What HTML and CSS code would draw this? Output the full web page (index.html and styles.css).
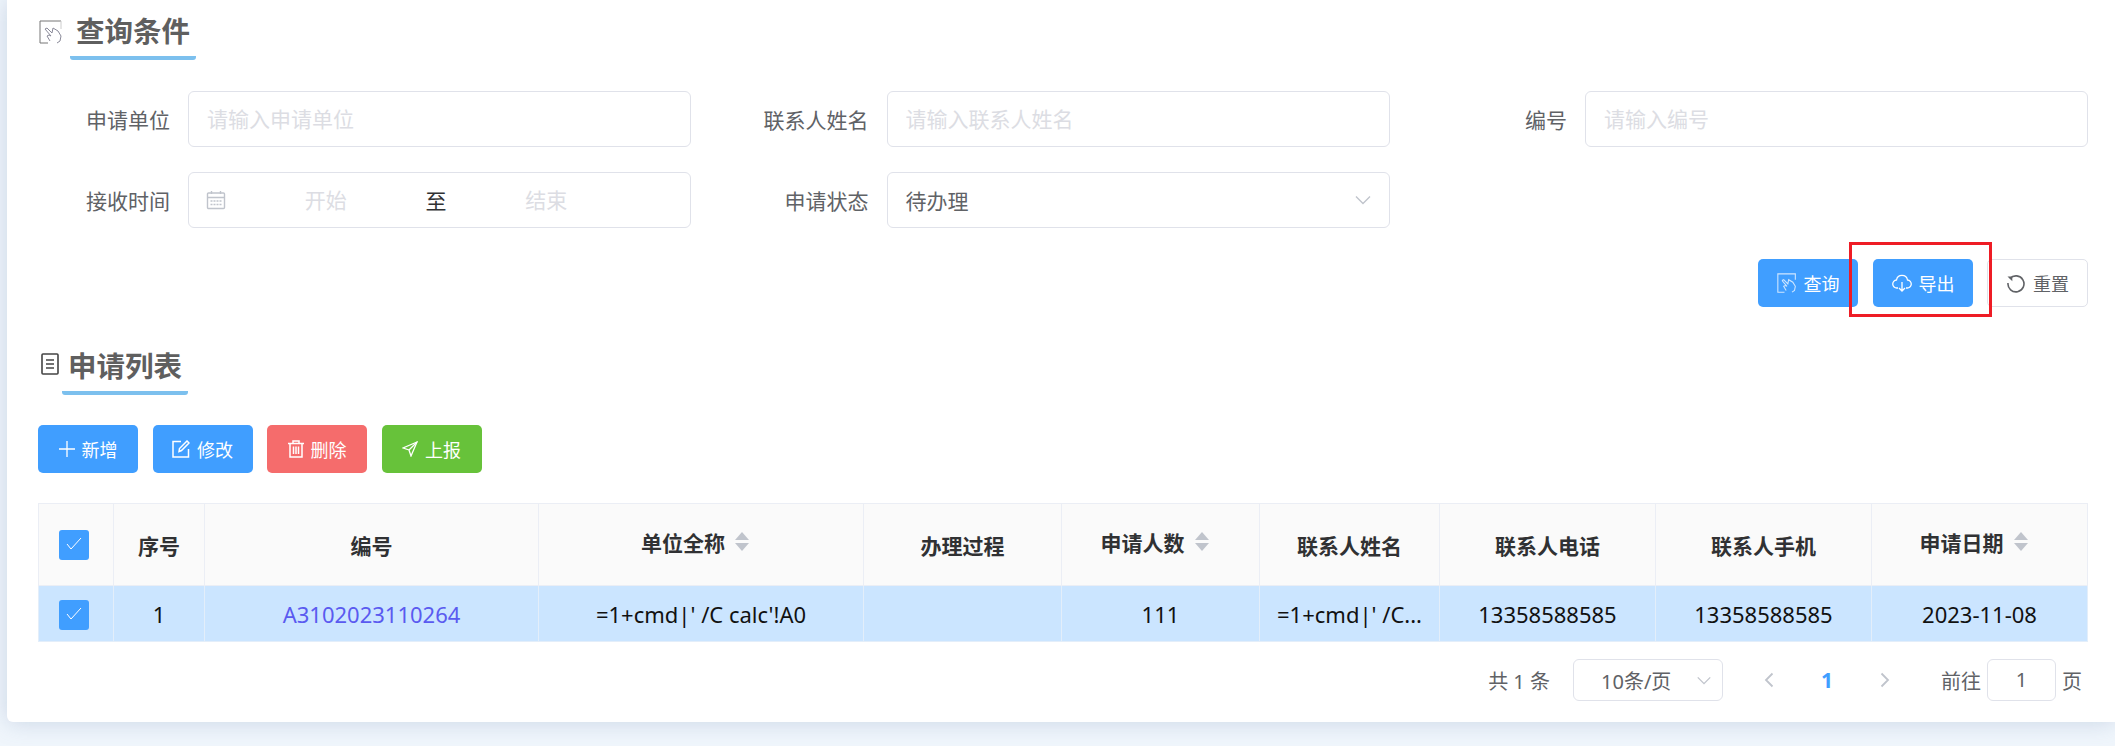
FILE: index.html
```html
<!DOCTYPE html>
<html lang="zh-CN">
<head>
    <meta charset="UTF-8">
    <title>申请列表</title>
    <link rel="stylesheet" href="styles.css">
</head>
<body>

<div class="panel">

    <div class="section-title first">
        <svg class="title-icon" width="24" height="24" viewBox="0 0 24 24" fill="none" stroke="#777" stroke-width="1">
            <path d="M22 1H1v22h8"/>
            <path d="M22 1v8" stroke="#ccc"/>
            <path d="M6 9l6 7-2-1-2 1 3 5M6 9l2-1 5 5 1-5 5 3 3 5-1 5-3 2" stroke="#8a8a99"/>
        </svg>
        <span class="title-text">查询条件</span>
    </div>

    <div class="form-grid">
        <div class="form-item">
            <label class="form-label">申请单位</label>
            <input class="text-input" placeholder="请输入申请单位">
        </div>
        <div class="form-item">
            <label class="form-label">联系人姓名</label>
            <input class="text-input" placeholder="请输入联系人姓名">
        </div>
        <div class="form-item">
            <label class="form-label">编号</label>
            <input class="text-input" placeholder="请输入编号">
        </div>
        <div class="form-item">
            <label class="form-label">接收时间</label>
            <div class="date-range">
                <svg width="20" height="20" viewBox="0 0 20 20" fill="none" stroke="#c0c4cc" stroke-width="1.4">
                    <rect x="1.500" y="3" width="17" height="15.500" rx="1"/>
                    <path d="M1.500 7.500h17M5.500 1v3M14.500 1v3"/>
                    <path d="M4.500 11h11M4.500 14.500h11" stroke-dasharray="2 1"/>
                </svg>
                <input class="date-input" placeholder="开始">
                <span class="date-sep">至</span>
                <input class="date-input" placeholder="结束">
            </div>
        </div>
        <div class="form-item">
            <label class="form-label">申请状态</label>
            <div class="select-box">
                <span>待办理</span>
                <svg width="18" height="10" viewBox="0 0 18 10" fill="none" stroke="#c0c4cc" stroke-width="1.4"><path d="M2 1.500l7 7 7-7"/></svg>
            </div>
        </div>
    </div>

    <div class="form-actions">
        <button class="btn btn-blue">
            <svg width="20" height="22" viewBox="0 0 24 24" fill="none" stroke="#cfe6ff" stroke-width="1.300">
                <path d="M22 8V1H1v22h8"/>
                <path d="M6 9l6 7-2-1-2 1 3 5M6 9l2-1 5 5 1-5 5 3 3 5-1 5-3 2"/>
            </svg>
            查询
        </button>
        <button class="btn btn-blue btn-marked">
            <svg width="20" height="20" viewBox="0 0 20 20" fill="none" stroke="#fff" stroke-width="1.300">
                <path d="M6 15H5a4 4 0 0 1-.5-8A5.600 5.600 0 0 1 15.500 7 4 4 0 0 1 15 15h-1"/>
                <path d="M10 9v9M7 15l3 3 3-3"/>
            </svg>
            导出
            <span class="red-mark"></span>
        </button>
        <button class="btn btn-plain">
            <svg width="20" height="20" viewBox="0 0 20 20" fill="none" stroke="#606266" stroke-width="1.600">
                <path d="M4 5.500A8 8 0 1 1 2 10"/>
                <path d="M1.500 3.500l4.800 4.800V3.500z" stroke="none" fill="#606266"/>
            </svg>
            重置
        </button>
    </div>

    <div class="section-title second">
        <svg class="title-icon-list" width="18" height="22" viewBox="0 0 18 22" fill="none" stroke="#444" stroke-width="1.600">
            <rect x="1" y="1" width="16" height="20" rx="1"/>
            <path d="M5 7h8M5 11h8M5 15h8"/>
        </svg>
        <span class="title-text">申请列表</span>
    </div>

    <div class="toolbar">
        <button class="btn btn-blue">
            <svg width="16" height="16" viewBox="0 0 16 16" fill="none" stroke="#fff" stroke-width="1.300"><path d="M8 0v16M0 8h16"/></svg>
            新增
        </button>
        <button class="btn btn-blue">
            <svg width="18" height="18" viewBox="0 0 18 18" fill="none" stroke="#fff" stroke-width="1.500">
                <path d="M9 1.500H1v15.500h15.500V9"/>
                <path d="M7 11.500l.5-3L15 1l2 2-7.500 7.500z"/>
            </svg>
            修改
        </button>
        <button class="btn btn-red">
            <svg width="16" height="18" viewBox="0 0 16 18" fill="none" stroke="#fff" stroke-width="1.500">
                <path d="M0 3.500h16M5 3.500V1h6v2.500M2 3.500V17h12V3.500M5.500 6.500V14M8 6.500V14M10.500 6.500V14"/>
            </svg>
            删除
        </button>
        <button class="btn btn-green">
            <svg width="16" height="16" viewBox="0 0 16 16" fill="none" stroke="#fff" stroke-width="1.300">
                <path d="M15 1L1 7l6 2 2 6z"/><path d="M15 1L7 9"/>
            </svg>
            上报
        </button>
    </div>

    <table class="data-table">
        <colgroup>
            <col class="col-check"><col class="col-index"><col class="col-code"><col class="col-name">
            <col class="col-process"><col class="col-count"><col class="col-contact">
            <col class="col-phone"><col class="col-phone"><col class="col-phone">
        </colgroup>
        <thead>
            <tr>
                <th class="check-cell"><span class="checkbox"><svg class="check-mark" width="16" height="13" viewBox="0 0 16 13" fill="none" stroke="#fff" stroke-width="1"><path d="M1 7l4 5L15 1"/></svg></span></th>
                <th>序号</th>
                <th>编号</th>
                <th><span class="sort-head">单位全称<span class="carets"><i class="caret-up"></i><i class="caret-down"></i></span></span></th>
                <th>办理过程</th>
                <th><span class="sort-head">申请人数<span class="carets"><i class="caret-up"></i><i class="caret-down"></i></span></span></th>
                <th>联系人姓名</th>
                <th>联系人电话</th>
                <th>联系人手机</th>
                <th><span class="sort-head">申请日期<span class="carets"><i class="caret-up"></i><i class="caret-down"></i></span></span></th>
            </tr>
        </thead>
        <tbody>
            <tr>
                <td class="check-cell"><span class="checkbox"><svg class="check-mark" width="16" height="13" viewBox="0 0 16 13" fill="none" stroke="#fff" stroke-width="1"><path d="M1 7l4 5L15 1"/></svg></span></td>
                <td>1</td>
                <td><a class="code-link" href="#">A3102023110264</a></td>
                <td>=1+cmd|' /C calc'!A0</td>
                <td></td>
                <td>111</td>
                <td>=1+cmd|' /C...</td>
                <td>13358588585</td>
                <td>13358588585</td>
                <td>2023-11-08</td>
            </tr>
        </tbody>
    </table>

    <div class="pagination">
        <span class="page-total">共 1 条</span>
        <div class="page-size">
            <span>10条/页</span>
            <svg width="16" height="9" viewBox="0 0 18 10" fill="none" stroke="#c0c4cc" stroke-width="1.500"><path d="M2 1.500l7 7 7-7"/></svg>
        </div>
        <svg class="page-prev" width="10" height="16" viewBox="0 0 10 16" fill="none" stroke="#c0c4cc" stroke-width="1.800"><path d="M8.500 1.500L2 8l6.500 6.500"/></svg>
        <span class="page-current">1</span>
        <svg class="page-next" width="10" height="16" viewBox="0 0 10 16" fill="none" stroke="#c0c4cc" stroke-width="1.800"><path d="M1.500 1.500L8 8l-6.500 6.500"/></svg>
        <span class="page-jump">前往</span>
        <div class="page-input">1</div>
        <span>页</span>
    </div>

</div>

</body>
</html>
```

FILE: styles.css
```css
body {
    margin: 0;
    height: 746px;
    overflow: hidden;
    background: #f0f6fc;
    font-family: "Noto Sans", "Noto Sans CJK SC", sans-serif;
    color: #606266;
}
.panel {
    box-sizing: border-box;
    height: 722px;
    margin-left: 7px;
    padding: 0 27px 0 31px;
    background: #fff;
    border-bottom-left-radius: 6px;
    box-shadow: 0 0 24px rgba(90, 115, 160, 0.26);
}
.section-title {
    display: flex;
    align-items: flex-start;
}
.section-title.first {
    padding-top: 12px;
}
.section-title.second {
    margin-top: 40px;
}
.title-icon {
    margin: 8px 0 0 1px;
}
.title-icon-list {
    margin: 6px 0 0 3px;
}
.title-text {
    font-size: 28.5px;
    line-height: 38px;
    font-weight: 700;
    color: #5f5f5f;
    padding: 0 6px 6px;
    margin-left: 7px;
    border-bottom: 4px solid #7cc0ee;
    border-radius: 0 0 3px 3px;
}
.second .title-text {
    margin-left: 3px;
}
.form-grid {
    display: grid;
    grid-template-columns: repeat(3, 653px);
    column-gap: 45.5px;
    row-gap: 25px;
    margin-top: 31px;
}
.form-item {
    display: flex;
    align-items: center;
}
.form-label {
    width: 150px;
    padding-right: 18px;
    box-sizing: border-box;
    text-align: right;
    font-size: 21px;
    color: #606266;
}
.text-input,
.date-range,
.select-box {
    box-sizing: border-box;
    width: 503px;
    height: 56px;
    border: 1.5px solid #e0e2ea;
    border-radius: 6px;
    background: #fff;
    font-family: inherit;
    font-size: 21px;
    color: #606266;
}
.text-input {
    padding: 0 18px;
    outline: none;
}
.text-input::placeholder,
.date-input::placeholder {
    color: #dcdde3;
}
.date-range {
    display: flex;
    align-items: center;
    padding: 0 44px 0 17px;
}
.date-input {
    flex: 1;
    min-width: 0;
    border: none;
    outline: none;
    text-align: center;
    font-family: inherit;
    font-size: 21px;
    background: transparent;
}
.date-sep {
    color: #303133;
}
.select-box {
    display: flex;
    align-items: center;
    justify-content: space-between;
    padding: 0 17px 0 18px;
}
.form-actions {
    display: flex;
    justify-content: flex-end;
    gap: 15px;
    margin-top: 31px;
}
.btn {
    display: flex;
    align-items: center;
    justify-content: center;
    gap: 7px;
    box-sizing: border-box;
    width: 100px;
    height: 48px;
    padding: 0;
    border: none;
    border-radius: 5px;
    font-family: inherit;
    font-size: 18px;
    color: #fff;
}
.btn-blue {
    background: #409eff;
}
.btn-red {
    background: #f56c6c;
}
.btn-green {
    background: #67c23a;
}
.btn-plain {
    background: #fff;
    border: 1.5px solid #e0e2ea;
    color: #606266;
    width: 101px;
    margin-left: -1px;
}
.btn-marked {
    position: relative;
}
.red-mark {
    position: absolute;
    top: -17px;
    left: -24px;
    right: -19px;
    bottom: -10px;
    border: 3px solid #ee1c25;
}
.toolbar {
    display: flex;
    gap: 14.5px;
    margin-top: 30px;
}
.data-table {
    width: 2050px;
    margin-top: 30px;
    border-collapse: collapse;
    table-layout: fixed;
}
.col-check { width: 75px; }
.col-index { width: 91px; }
.col-code { width: 334px; }
.col-name { width: 325px; }
.col-process { width: 198px; }
.col-count { width: 198px; }
.col-contact { width: 180px; }
.col-phone { width: 216px; }
.data-table th,
.data-table td {
    padding: 0;
    text-align: center;
    vertical-align: middle;
}
.data-table th {
    height: 81px;
    background: #fafafa;
    border: 1.5px solid #ebeef5;
    font-size: 21px;
    font-weight: 700;
    color: #303133;
}
.data-table td {
    height: 55px;
    background: #cbe5ff;
    border: 1.5px solid #e3eefa;
    font-size: 22px;
    color: #111;
}
.data-table .check-cell {
    padding-right: 5px;
}
.code-link {
    color: #5a5af0;
    text-decoration: none;
}
.checkbox {
    display: inline-flex;
    align-items: center;
    justify-content: center;
    width: 30px;
    height: 30px;
    vertical-align: middle;
    background: #409eff;
    border-radius: 3px;
}
.check-mark {
    margin-bottom: 4px;
}
.sort-head {
    display: inline-flex;
    align-items: center;
    gap: 10px;
    margin-right: 12px;
    position: relative;
    top: -3px;
}
.carets {
    display: flex;
    flex-direction: column;
    gap: 3px;
}
.caret-up,
.caret-down {
    width: 0;
    height: 0;
    border-left: 7px solid transparent;
    border-right: 7px solid transparent;
}
.caret-up {
    border-bottom: 8px solid #c0c4cc;
}
.caret-down {
    border-top: 8px solid #c0c4cc;
}
.pagination {
    display: flex;
    align-items: center;
    justify-content: flex-end;
    margin-top: 17px;
    padding-right: 6px;
    font-size: 20px;
    color: #606266;
}
.page-size {
    display: flex;
    align-items: center;
    justify-content: space-between;
    box-sizing: border-box;
    width: 150px;
    height: 42px;
    margin-left: 23px;
    padding: 0 10px 0 27px;
    border: 1.5px solid #e0e2ea;
    border-radius: 6px;
}
.page-prev {
    margin-left: 41px;
}
.page-current {
    width: 106px;
    text-align: center;
    font-size: 21px;
    font-weight: 700;
    color: #409eff;
}
.page-jump {
    margin-left: 51px;
}
.page-input {
    box-sizing: border-box;
    width: 69px;
    height: 42px;
    margin: 0 6px;
    line-height: 39px;
    text-align: center;
    border: 1.5px solid #e0e2ea;
    border-radius: 6px;
}
```
